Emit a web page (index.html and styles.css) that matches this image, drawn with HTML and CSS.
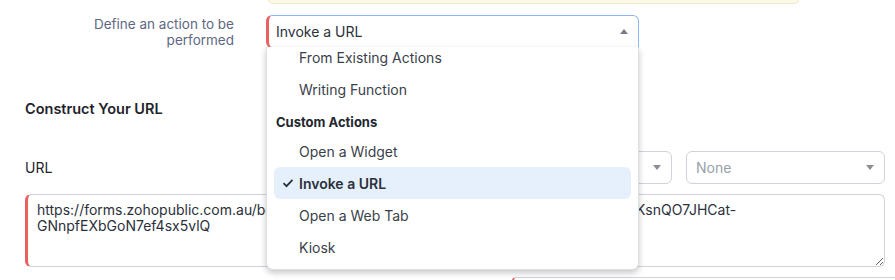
FILE: index.html
```html
<!DOCTYPE html>
<html lang="en">

<head>
  <meta charset="UTF-8" />
  <meta name="viewport" content="width=device-width, initial-scale=1.0" />
  <title>Invoke a URL</title>
  <link rel="stylesheet" href="styles.css">
</head>

<body>
  <div class="notice"></div>

  <div class="row action-row">
    <label class="row-label"><span>Define an action to be performed</span></label>
    <div class="field">
      <div class="select open">
        <span class="select-value">Invoke a URL</span>
        <span class="caret up"></span>
      </div>

      <!-- dropdown lies over the form below -->
      <div class="dropdown">
        <ul class="options">
          <li class="option">From Existing Actions</li>
          <li class="option">Writing Function</li>
          <li class="group">Custom Actions</li>
          <li class="option">Open a Widget</li>
          <li class="option selected">
            <svg class="tick" width="12" height="10" viewBox="0 0 12 10">
              <path d="M1.5 5.2 L4.5 8.2 L10.5 1.8" fill="none" stroke="#2b303b" stroke-width="1.8" />
            </svg>Invoke a URL
          </li>
          <li class="option">Open a Web Tab</li>
          <li class="option">Kiosk</li>
        </ul>
      </div>
    </div>
  </div>

  <h3 class="section-title">Construct Your URL</h3>

  <div class="url-block">
    <div class="url-head">
      <span class="url-label">URL</span>
      <div class="url-selects">
        <div class="select small">
          <span class="select-value placeholder">None</span>
          <span class="caret"></span>
        </div>
        <div class="select small">
          <span class="select-value placeholder">None</span>
          <span class="caret"></span>
        </div>
      </div>
    </div>
    <textarea class="url-input" spellcheck="false">https://forms.zohopublic.com.au/bookings2024/form/InvokeActionRequest/formperma/Zt_KsnQO7JHCat-GNnpfEXbGoN7ef4sx5vlQ</textarea>
  </div>

  <div class="next-field"></div>
</body>

</html>
```

FILE: styles.css
```css
* {
  margin: 0;
  padding: 0;
  box-sizing: border-box;
}

body {
  font-family: Inter, "Noto Sans", sans-serif;
  font-size: 14px;
  color: #2b303b;
  background: #fff;
  overflow: hidden;
}

.notice {
  width: 531px;
  height: 5px;
  margin-left: 268px;
  margin-top: -1px;
  background: #fdf9e7;
  border: 1px solid #efe7c6;
  border-top: none;
  border-radius: 0 0 8px 8px;
}

.row {
  display: flex;
  gap: 32px;
}

.action-row {
  margin-top: 11px;
}

.row-label {
  display: flex;
  justify-content: flex-end;
  width: 234px;
  padding-top: 1px;
}

.row-label span {
  max-width: 150px;
  text-align: right;
  color: #5d6884;
  font-size: 13.5px;
  line-height: 16px;
}

.field {
  position: relative;
  width: 373px;
}

.select {
  display: flex;
  align-items: center;
  justify-content: space-between;
  height: 33px;
  padding: 0 10px 0 9px;
  border: 1px solid #cfd3da;
  border-radius: 6px;
  background: #fff;
}

.select.open {
  border-color: #8db6f3;
  border-left: 3px solid #ec5f5f;
  padding-left: 7px;
  border-radius: 6px 6px 0 6px;
}

.select-value {
  color: #2b303b;
}

.placeholder {
  color: #9aa0ab;
}

.caret {
  width: 0;
  height: 0;
  border-left: 4.5px solid transparent;
  border-right: 4.5px solid transparent;
  border-top: 5px solid #8a8e96;
}

.caret.up {
  border-top: none;
  border-bottom: 5px solid #777b83;
}

.dropdown {
  position: absolute;
  top: 32px;
  left: 0;
  width: 373px;
  height: 223px;
  overflow: hidden;
  background: #fff;
  border: 1px solid #dcdfe4;
  border-top: none;
  border-radius: 0 0 7px 7px;
  box-shadow: 0 3px 6px rgba(0, 0, 0, 0.22);
  z-index: 2;
}

.options {
  list-style: none;
  margin-top: -6px;
  padding: 0 7px;
}

.option {
  display: flex;
  align-items: center;
  height: 32px;
  padding-left: 25px;
  color: #3a3f4a;
  border-radius: 6px;
}

.option.selected {
  background: #e6f0fc;
  font-weight: 600;
  color: #2b303b;
  padding-left: 8px;
}

.tick {
  margin-right: 5px;
}

.group {
  height: 30px;
  line-height: 35px;
  padding-left: 2px;
  font-size: 13px;
  font-weight: 700;
  color: #22262e;
}

.section-title {
  margin: 52px 0 0 25px;
  font-size: 14.5px;
  font-weight: 600;
  color: #1f232b;
  line-height: 18px;
}

.url-block {
  margin: 33px 10px 0 25px;
}

.url-head {
  display: flex;
  justify-content: space-between;
  align-items: center;
}

.url-label {
  color: #1f232b;
}

.url-selects {
  display: flex;
  gap: 14px;
}

.select.small {
  width: 199px;
}

.url-input {
  display: block;
  width: 860px;
  height: 73px;
  margin-top: 10px;
  padding: 7px 10px 0 9px;
  font-family: Inter, "Noto Sans", sans-serif;
  font-size: 14px;
  line-height: 16px;
  color: #2b303b;
  border: 1px solid #cfd3da;
  border-left: 3px solid #ec5f5f;
  border-radius: 6px;
  resize: vertical;
  overflow-wrap: break-word;
}

.next-field {
  margin: 10px 0 0 512px;
  height: 4px;
  border-top: 1px solid #cfd3da;
  border-left: 2px solid #ec5f5f;
  border-radius: 6px 0 0 0;
}
```
